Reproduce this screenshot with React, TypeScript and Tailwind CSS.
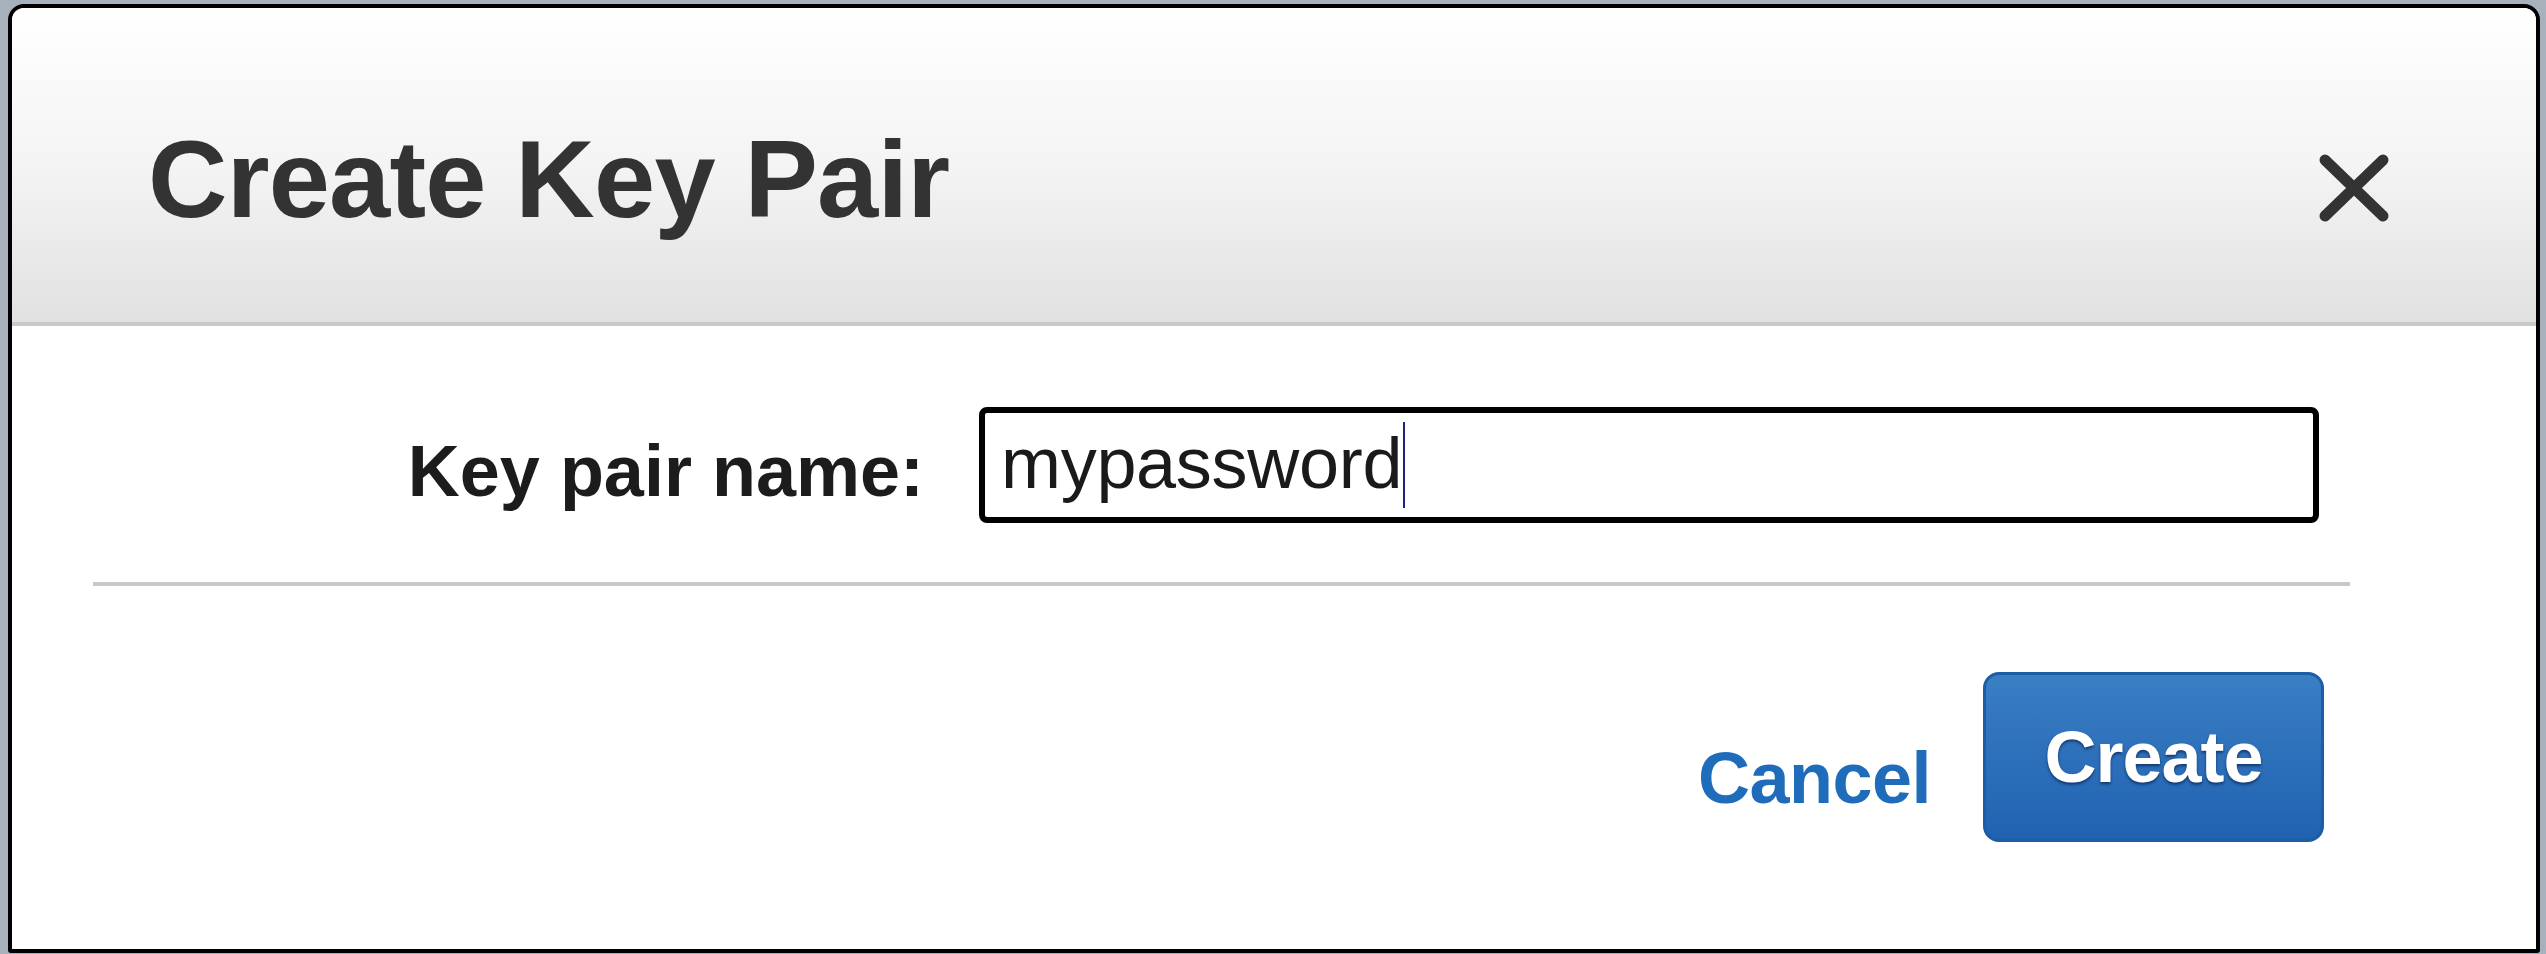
import React from "react";

export default function App() {
  const font = { fontFamily: '"Liberation Sans", Arial, sans-serif' };
  return (
    <div className="w-[2546px] h-[954px] bg-[#a7b1bb] pt-[4px] pl-[8px] pr-[6px] overflow-hidden" style={font}>
      <div className="h-[949px] bg-white border-[4px] border-black rounded-t-[16px] rounded-b-[3px] overflow-hidden flex flex-col">
        {/* Header */}
        <div className="h-[318px] shrink-0 bg-gradient-to-b from-white via-[#f4f4f4] to-[#e1e1e1] border-b-[4px] border-[#c9c9c9] flex items-start justify-between pl-[136px] pr-[146px] pt-[116px]">
          <h1 className="text-[110px] leading-none font-bold text-[#333333] tracking-[-0.8px]">Create Key Pair</h1>
          <svg width="72" height="68" viewBox="0 0 72 68" className="mt-[30px]">
            <path d="M7 6 L65 62 M65 6 L7 62" stroke="#333333" strokeWidth="11" strokeLinecap="round" />
          </svg>
        </div>

        {/* Body */}
        <div className="flex items-start pt-[81px]">
          <div className="w-[912px] shrink-0 text-right mt-[28px] text-[72px] leading-none font-bold text-[#1c1c1c]">
            Key pair name:
          </div>
          <div className="ml-[55px] w-[1340px] h-[116px] shrink-0 border-[6px] border-black rounded-[8px] bg-white flex items-center pl-[16px]">
            <span className="text-[72px] leading-none text-[#1a1a1a] tracking-[-0.3px] -mt-[4px]">mypassword</span>
            <span className="w-[2px] h-[86px] bg-[#1a237e] ml-[1px]" />
          </div>
        </div>

        <div className="mt-[59px] ml-[81px] mr-[186px] h-[4px] bg-[#c8c8c8]" />

        {/* Footer */}
        <div className="flex items-start justify-end pt-[86px] pr-[212px]">
          <span className="mt-[70px] text-[72px] leading-none font-bold text-[#1f6cbb] tracking-[-0.5px]">Cancel</span>
          <button className="ml-[52px] w-[341px] h-[170px] rounded-[16px] border-[3px] border-[#1d5ca6] bg-gradient-to-b from-[#3a7ec4] to-[#2062b0] flex items-center justify-center text-[72px] leading-none font-bold text-white tracking-[-1px] [text-shadow:0_2px_3px_rgba(10,40,90,0.8)]">
            Create
          </button>
        </div>
      </div>
    </div>
  );
}
